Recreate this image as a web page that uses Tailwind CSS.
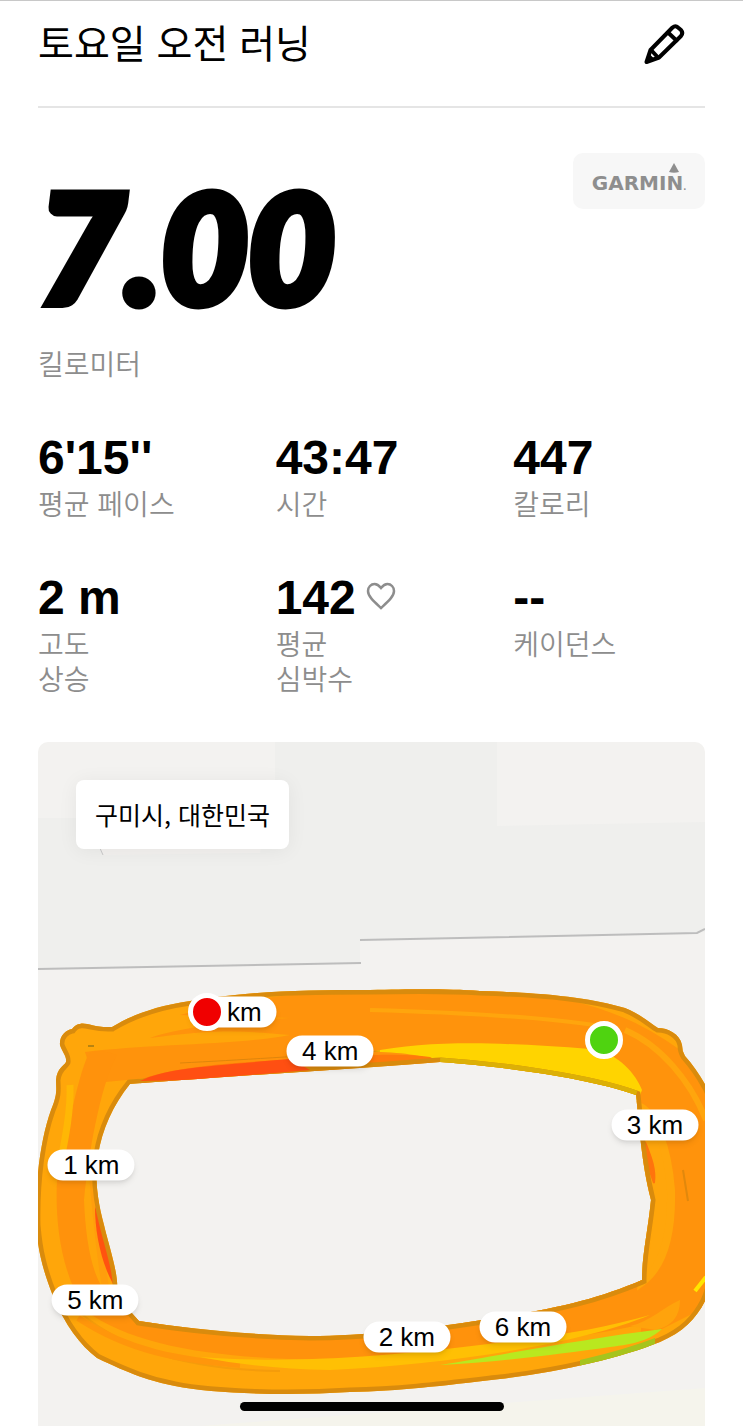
<!DOCTYPE html>
<html lang="ko">
<head>
    <meta charset="UTF-8">
    <meta name="viewport" content="width=device-width, initial-scale=1.0">
    <script src="https://cdn.jsdelivr.net/npm/@tailwindcss/browser@4"></script>
    <title>토요일 오전 러닝</title>
</head>
<body class="bg-white text-black font-['Liberation_Sans','Noto_Sans_CJK_KR',sans-serif]">
    <div class="relative border-t border-[#c8c8c8] px-[38px]">

        <!-- Title -->
        <header class="flex items-center justify-between h-[107px] pb-[20px] border-b-2 border-[#e5e5e5]">
            <h1 class="pb-[6px] text-[39px] leading-[48px] font-['Noto_Sans_CJK_KR',sans-serif]">토요일 오전 러닝</h1>
            <button type="button" aria-label="이름 편집" class="mr-[18px]">
                <svg class="w-[46px] h-[46px]" viewBox="0 0 46 46" fill="none" stroke="#000" stroke-width="4" stroke-linejoin="round" stroke-linecap="round">
                    <path d="M5.500 41 L9.500 29 L31.500 6.500 Q34.500 4 37 6.500 L40 9 Q42.500 12 40 15 L18 36.500 Z"/>
                    <path d="M27 11.500 L35.500 19.500"/>
                    <path d="M10.500 29.500 L17 36.500"/>
                    <path d="M5.500 41 L8 34 L12.500 38.500 Z" fill="#000" stroke-width="2"/>
                </svg>
            </button>
        </header>

        <!-- Distance -->
        <section class="flex items-start justify-between pt-[45px]">
            <div>
                <p class="pt-[11px] text-[150px] leading-[164px] font-black italic font-['Lato',sans-serif] [-webkit-text-stroke:9px_#000]">7.00</p>
                <p class="mt-[18px] text-[28px] leading-[35px] text-[#8d8d8d] font-['Noto_Sans_CJK_KR',sans-serif] font-[350]">킬로미터</p>
            </div>
            <div class="relative flex items-center justify-center w-[132px] h-[56px] rounded-[10px] bg-[#f7f7f7]">
                <span class="pt-[8px] text-[20px] leading-[20px] font-bold text-[#8e8e8e] font-['DejaVu_Sans',sans-serif]">GARMIN<span class="text-[8px]">.</span></span>
                <svg class="absolute right-[25px] top-[10px] w-[12px] h-[10px]" viewBox="0 0 12 10"><path d="M6 0 L11 9 Q6 10.500 1 9 Z" fill="#8e8e8e"/></svg>
            </div>
        </section>

        <!-- Stats -->
        <dl class="grid grid-cols-3 gap-x-[46px] gap-y-[51px] mt-[51px] text-[28px] leading-[35px]">
            <div>
                <dt class="text-[48px] leading-[52px] font-bold">6'15''</dt>
                <dd class="mt-[2px] text-[#8d8d8d] font-[350] font-['Noto_Sans_CJK_KR',sans-serif]">평균 페이스</dd>
            </div>
            <div>
                <dt class="text-[48px] leading-[52px] font-bold">43:47</dt>
                <dd class="mt-[2px] text-[#8d8d8d] font-[350] font-['Noto_Sans_CJK_KR',sans-serif]">시간</dd>
            </div>
            <div>
                <dt class="text-[48px] leading-[52px] font-bold">447</dt>
                <dd class="mt-[2px] text-[#8d8d8d] font-[350] font-['Noto_Sans_CJK_KR',sans-serif]">칼로리</dd>
            </div>
            <div>
                <dt class="text-[48px] leading-[52px] font-bold">2 m</dt>
                <dd class="mt-[2px] text-[#8d8d8d] font-[350] font-['Noto_Sans_CJK_KR',sans-serif]">고도<br>상승</dd>
            </div>
            <div>
                <dt class="flex items-center gap-[10px] text-[48px] leading-[52px] font-bold">142
                    <svg class="w-[30px] h-[28px] mb-1" viewBox="0 0 30 28" fill="none" stroke="#8d8d8d" stroke-width="2.500" stroke-linejoin="miter">
                        <path d="M15 26 C8 19.500 2 14.500 2 9 C2 5 5 2 8.500 2 C11.500 2 13 3.500 15 6 C17 3.500 18.500 2 21.500 2 C25 2 28 5 28 9 C28 14.500 22 19.500 15 26 Z"/>
                    </svg>
                </dt>
                <dd class="mt-[2px] text-[#8d8d8d] font-[350] font-['Noto_Sans_CJK_KR',sans-serif]">평균<br>심박수</dd>
            </div>
            <div>
                <dt class="text-[48px] leading-[52px] font-bold">--</dt>
                <dd class="mt-[2px] text-[#8d8d8d] font-[350] font-['Noto_Sans_CJK_KR',sans-serif]">케이던스</dd>
            </div>
        </dl>

        <!-- Route map -->
        <section class="relative mt-[46px] aspect-[667/684] overflow-hidden rounded-t-[10px] bg-[#f3f2f0]">
            <svg class="block w-full h-full" viewBox="38 742 667 684">
                <defs>
                    <path id="track" clip-rule="evenodd" fill-rule="evenodd" d="M80 1024 C86 1022 94 1028 112 1027 C130 1016 155 1006 190 1001 C250 991 300 990 370 990 C420 989 450 989 480 991 C550 993 590 998 625 1008 C640 1014 650 1023 658 1028 C668 1028 680 1034 682 1045 Q682 1051 685 1056 C693 1065 700 1075 706 1086 C722 1110 728 1250 705 1301 C696 1319 683 1332 660 1342 C620 1358 560 1372 500 1379 C440 1386 400 1391 350 1392 C290 1396 215 1394 175 1386 C150 1381 130 1374 97 1358 C80 1345 65 1325 53 1296 C42 1268 38 1250 36 1225 C35 1180 41 1138 51 1110 C58 1094 56 1088 56 1080 C57 1068 64 1066 66 1062 C67 1056 62 1052 60 1045 C59 1036 66 1030 72 1029 Q76 1024 80 1024 Z
                        M130 1084 C200 1079 250 1075 300 1072 C350 1069 400 1065 440 1062 C500 1066 590 1078 636 1095 C640 1130 641 1160 651 1200 C648 1230 642 1255 642 1280 C600 1298 560 1308 500 1317 C430 1329 360 1336 310 1336 C250 1335 190 1329 139 1321 C130 1311 121 1300 117 1292 C119 1275 110 1250 104 1225 C96 1195 95 1175 98 1155 C102 1130 113 1105 130 1084 Z"/>
                    <clipPath id="trackClip"><use href="#track"/></clipPath>
                    <clipPath id="trackGreen"><path d="M580 1350 L655 1325 V1400 H580 Z"/></clipPath>
                </defs>

                <!-- land parcels -->
                <path d="M275 742 H497 V826 L705 822 V932 L697 933 L360 940 V963 L38 969 V818 L275 818 Z" fill="#efefed"/>
                <path d="M102 855 L260 853 L262 840 H98 Z" fill="#f3f1ef"/>
                <path d="M200 1426 L705 1388 V1426 Z" fill="#f5f4ec"/>
                <path d="M38 969 L361 963 M360 940 L697 933 L705 929" fill="none" stroke="#bdbdbd" stroke-width="2"/>
                <path d="M99 846 L103 855" fill="none" stroke="#c9c9c9" stroke-width="1"/>

                <g clip-path="url(#trackClip)" fill="none">
                    <rect x="30" y="980" width="690" height="430" fill="#ffa60a"/>
                    <!-- top -->
                    <path d="M180 1015 C260 992 340 992 400 990 C520 988 600 992 680 1050 L720 1110 V1300 L640 1340 L655 1180 L636 1095 C560 1055 440 1048 340 1064 L230 1070 L95 1083 L85 1052 C150 1044 240 1045 290 1035 C240 1030 210 1030 150 1038 C170 1030 230 1020 290 1018 Z" fill="#ff930c"/>
                    <path d="M370 1010 C440 1012 540 1016 600 1026" stroke="#ffa50d" stroke-width="4"/>
                    <path d="M625 1030 C660 1045 690 1080 706 1120" stroke="#ffa50d" stroke-width="6"/>
                    <path d="M370 1052 C430 1040 500 1042 590 1049 C620 1053 636 1075 642 1090 L638 1100 C560 1078 500 1068 435 1062 C425 1055 400 1052 370 1052 Z" fill="#ffd400"/>
                    <path d="M140 1080 C170 1068 220 1063 300 1059 C350 1056 400 1052 430 1057 L440 1062 C350 1068 250 1077 140 1084 Z" fill="#ff7a0a"/>
                    <path d="M180 1063 C240 1060 300 1056 380 1051" stroke="#df850c" stroke-width="1"/>
                    <path d="M88 1046 H94" stroke="#b98410" stroke-width="2"/>
                    <!-- left -->
                    <path d="M88 1055 C92 1050 105 1050 117 1055 C103 1080 90 1140 84 1200 C86 1250 95 1290 115 1300 L140 1320 C200 1332 280 1338 330 1336 C420 1334 540 1314 660 1270 V1320 C560 1345 400 1360 290 1359 C210 1356 130 1345 85 1310 C60 1270 55 1220 57 1180 C68 1130 77 1080 88 1055 Z" fill="#ff920c"/>
                    <path d="M70 1085 C71 1110 65 1140 60 1165" stroke="#ffb705" stroke-width="7"/>
                    <path d="M93 1180 C96 1215 99 1250 106 1290" stroke="#ff9e0c" stroke-width="7"/>
                    <path d="M95 1207 C107 1230 113 1260 113 1284 C100 1260 95 1230 95 1207 Z" fill="#ff5310"/>
                    <!-- bottom -->
                    <path d="M75 1308 C120 1350 190 1370 280 1371" stroke="#f59c0b" stroke-width="2"/>
                    <path d="M78 1318 C130 1352 180 1360 240 1365" stroke="#ff960b" stroke-width="6"/>
                    <path d="M200 1357 C310 1365 410 1354 520 1340 C570 1334 610 1326 650 1315 C580 1344 450 1364 330 1370 Q260 1369 200 1357 Z" fill="#ffc004"/>
                    <path d="M630 1326 C650 1322 665 1306 680 1300 Q680 1325 655 1330 Z" fill="#ffa30c"/>
                    <path d="M440 1365 C500 1355 590 1338 662 1329 C650 1340 635 1344 610 1347 C560 1354 500 1362 440 1365 Z" fill="#b9e81f"/>
                    <!-- right -->
                    <path d="M636 1105 C655 1110 668 1150 671 1190 C672 1230 665 1265 642 1282 L652 1200 Z" fill="#ffa60b" stroke="#ffa60b" stroke-width="8"/>
                    <path d="M645 1142 C650 1155 656 1168 654 1183 Q647 1165 645 1142 Z" fill="#ff740d" stroke="#ff740d" stroke-width="2"/>
                    <path d="M683 1170 L688 1201" stroke="#e1880d" stroke-width="2"/>
                    <path d="M706 1277 L695 1291" stroke="#ffe600" stroke-width="4"/>
                    <!-- edge -->
                    <use href="#track" stroke="#d98b0d" stroke-width="9"/>
                    <path d="M440 1062 C500 1066 590 1078 636 1095" stroke="#dcb007" stroke-width="9"/>
                    <path d="M140 1081 C165 1068 210 1066 290 1059 L310 1070 L190 1080 Z" fill="#ff4f12"/>
                    <use href="#track" stroke="#a6c41d" stroke-width="11" clip-path="url(#trackGreen)"/>
                </g>
            </svg>

            <div class="absolute left-[38px] top-[38px] rounded-[8px] bg-white px-[19px] py-[17px] text-[25px] leading-[35px] font-['Noto_Sans_CJK_KR',sans-serif] shadow-[0_2px_20px_rgba(0,0,0,0.06)]">구미시, 대한민국</div>

            <!-- Kilometre pins -->
            <span class="absolute left-[29.3%] top-[39.5%] -translate-1/2 w-[87px] rounded-full bg-white text-center text-[26px] leading-[31px] shadow-md/10">7 km</span>
            <span class="absolute left-[43.8%] top-[45.2%] -translate-1/2 w-[87px] rounded-full bg-white text-center text-[26px] leading-[31px] shadow-md/10">4 km</span>
            <span class="absolute left-[92.5%] top-[56%] -translate-1/2 w-[87px] rounded-full bg-white text-center text-[26px] leading-[31px] shadow-md/10">3 km</span>
            <span class="absolute left-[8%] top-[61.8%] -translate-1/2 w-[87px] rounded-full bg-white text-center text-[26px] leading-[31px] shadow-md/10">1 km</span>
            <span class="absolute left-[8.6%] top-[81.6%] -translate-1/2 w-[87px] rounded-full bg-white text-center text-[26px] leading-[31px] shadow-md/10">5 km</span>
            <span class="absolute left-[55.3%] top-[87%] -translate-1/2 w-[87px] rounded-full bg-white text-center text-[26px] leading-[31px] shadow-md/10">2 km</span>
            <span class="absolute left-[72.7%] top-[85.5%] -translate-1/2 w-[87px] rounded-full bg-white text-center text-[26px] leading-[31px] shadow-md/10">6 km</span>

            <!-- Finish and start -->
            <span class="absolute left-[25.3%] top-[39.5%] -translate-1/2 size-[38px] rounded-full border-[5px] border-white bg-[#f00000]"></span>
            <span class="absolute left-[84.9%] top-[43.6%] -translate-1/2 size-[38px] rounded-full border-[5px] border-white bg-[#4fd310]"></span>
        </section>

        <!-- Home indicator -->
        <div class="absolute bottom-[15px] left-1/2 -translate-x-1/2 w-[264px] h-[9px] rounded-full bg-black"></div>
    </div>
</body>
</html>
